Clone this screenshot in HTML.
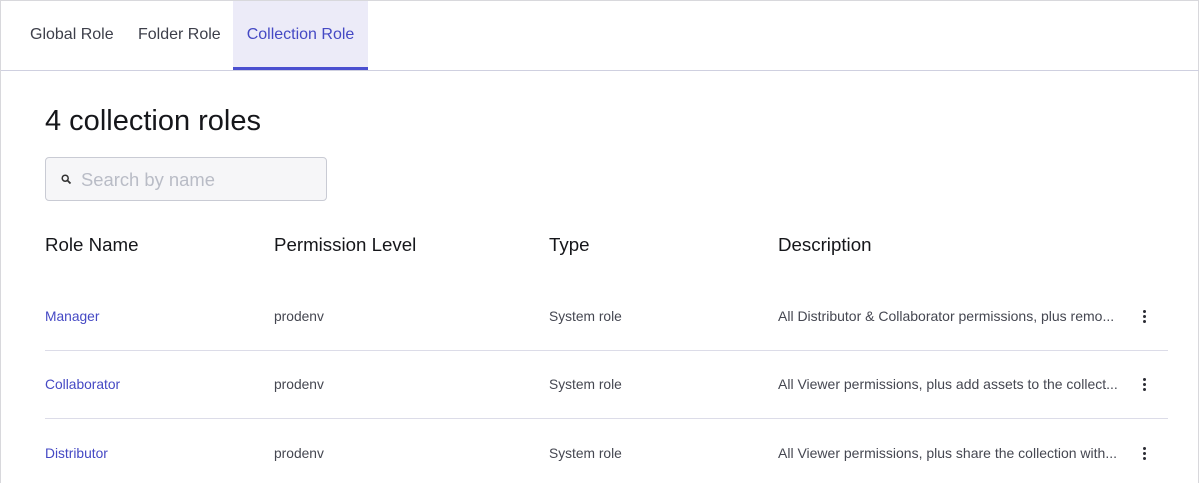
<!DOCTYPE html>
<html><head><meta charset="utf-8"><style>
*{box-sizing:border-box;margin:0;padding:0}
body{width:1200px;height:483px;overflow:hidden;background:#fff;font-family:"Liberation Sans",sans-serif;position:relative}
.frame{position:absolute;left:0;top:0;width:1199px;height:483px;border:1px solid #d8d8dc;border-bottom:none}
.tabs{position:absolute;left:1px;top:1px;right:1px;height:70px;border-bottom:1px solid #cfd0e0}
.tab{position:absolute;top:0;height:69px;line-height:68px;font-size:16px;color:#3d3f4a}
.tab.active{background:#ecebf8;color:#4549c4;border-bottom:3px solid #4a4fd0;line-height:68px}
h1{position:absolute;left:45px;top:105px;font-size:29px;font-weight:normal;color:#15161a}
.search{position:absolute;left:45px;top:157px;width:282px;height:44px;border:1px solid #c9cbd4;border-radius:4px;background:#f6f6f8}
.search span{position:absolute;left:35px;top:11px;font-size:18.4px;color:#b9bcc6}
.th{position:absolute;top:234px;font-size:18.7px;color:#15161a}
.td{position:absolute;font-size:13.8px;color:#454751;white-space:nowrap}
.desc{font-size:14px}
.link{color:#4549c4}
.line{position:absolute;left:45px;width:1123px;height:1px;background:#dcdce8}
.dots{position:absolute;left:1143px;width:4px}
.dots i{display:block;width:3px;height:3px;border-radius:50%;background:#2a2b33;margin-bottom:2px}
</style></head><body>
<div class="frame"></div>
<div class="tabs">
<div class="tab" style="left:29px">Global Role</div>
<div class="tab" style="left:137px">Folder Role</div>
<div class="tab active" style="left:232px;width:135px;text-align:center">Collection Role</div>
</div>
<h1>4 collection roles</h1>
<div class="search"><svg style="position:absolute;left:15px;top:16px" width="11" height="11" viewBox="0 0 11 11"><circle cx="4.2" cy="4.2" r="3" fill="none" stroke="#333" stroke-width="1.5"/><path d="M6.5 6.5L9.5 9.5" stroke="#333" stroke-width="1.8"/></svg><span>Search by name</span></div>
<div class="th" style="left:45px">Role Name</div>
<div class="th" style="left:274px">Permission Level</div>
<div class="th" style="left:549px">Type</div>
<div class="th" style="left:778px">Description</div>

<div class="td link" style="left:45px;top:309px">Manager</div>
<div class="td" style="left:274px;top:309px">prodenv</div>
<div class="td" style="left:549px;top:309px">System role</div>
<div class="td desc" style="left:778px;top:308px">All Distributor &amp; Collaborator permissions, plus remo...</div>
<div class="dots" style="top:310px"><i></i><i></i><i></i></div>
<div class="line" style="top:350px"></div>

<div class="td link" style="left:45px;top:377px">Collaborator</div>
<div class="td" style="left:274px;top:377px">prodenv</div>
<div class="td" style="left:549px;top:377px">System role</div>
<div class="td desc" style="left:778px;top:376px">All Viewer permissions, plus add assets to the collect...</div>
<div class="dots" style="top:378px"><i></i><i></i><i></i></div>
<div class="line" style="top:418px"></div>

<div class="td link" style="left:45px;top:446px">Distributor</div>
<div class="td" style="left:274px;top:446px">prodenv</div>
<div class="td" style="left:549px;top:446px">System role</div>
<div class="td desc" style="left:778px;top:445px">All Viewer permissions, plus share the collection with...</div>
<div class="dots" style="top:447px"><i></i><i></i><i></i></div>
</body></html>
